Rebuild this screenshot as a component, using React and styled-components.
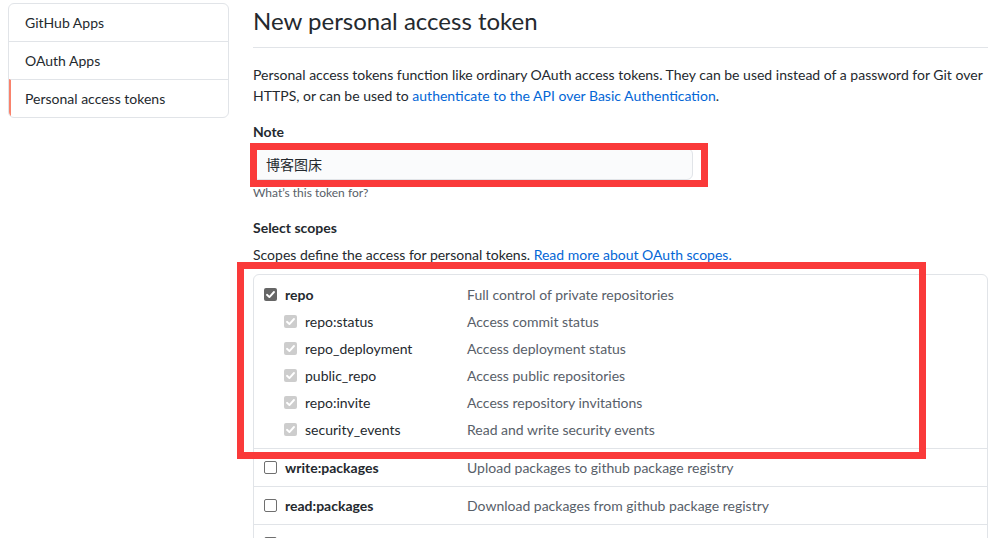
import React from "react";
import styled, { createGlobalStyle } from "styled-components";

const GlobalStyle = createGlobalStyle`
    html, body {
        margin: 0;
        overflow: hidden;
        background: #fff;
    }
    body {
        font-family: Lato, "Noto Sans CJK SC", sans-serif;
        font-size: 14px;
        line-height: 1.5;
        color: #24292e;
    }
`;

const menu = ["GitHub Apps", "OAuth Apps", "Personal access tokens"];

const repoScopes = [
    ["repo:status", "Access commit status"],
    ["repo_deployment", "Access deployment status"],
    ["public_repo", "Access public repositories"],
    ["repo:invite", "Access repository invitations"],
    ["security_events", "Read and write security events"],
];

const otherScopes = [
    ["write:packages", "Upload packages to github package registry"],
    ["read:packages", "Download packages from github package registry"],
    ["delete:packages", "Delete packages from github package registry"],
];

const Check = ({ state }) => (
    <Box state={state}>
        {state !== "off" && (
            <svg width="11" height="11" viewBox="0 0 11 11">
                <path d="M2 5.8 L4.4 8.1 L9 3" fill="none" stroke="#fff" strokeWidth="1.9" strokeLinecap="round" strokeLinejoin="round" />
            </svg>
        )}
    </Box>
);

const App = () => {
    return (
        <>
            <GlobalStyle />
            <Page>
                <Sidebar>
                    {menu.map((m, i) => (
                        <MenuItem key={m} selected={i === 2}>{m}</MenuItem>
                    ))}
                </Sidebar>
                <Main>
                    <Title>New personal access token</Title>
                    <Lead>
                        Personal access tokens function like ordinary OAuth access tokens. They can be used instead of a password for Git over
                        HTTPS, or can be used to <Link>authenticate to the API over Basic Authentication</Link>.
                    </Lead>

                    <Label>Note</Label>
                    <InputWrap>
                        <Input defaultValue="博客图床" />
                        <Mark top="-5px" left="-3px" right="-15px" bottom="-7px" />
                    </InputWrap>
                    <Hint>What’s this token for?</Hint>

                    <Label>Select scopes</Label>
                    <Desc>
                        Scopes define the access for personal tokens. <Link>Read more about OAuth scopes.</Link>
                    </Desc>

                    <ScopeBox>
                        <ScopeGroup>
                            <ScopeRow>
                                <ScopeName>
                                    <Check state="on" />
                                    <b>repo</b>
                                </ScopeName>
                                <ScopeDesc>Full control of private repositories</ScopeDesc>
                            </ScopeRow>
                            {repoScopes.map(([n, d]) => (
                                <ScopeRow key={n}>
                                    <ScopeName sub>
                                        <Check state="dim" />
                                        {n}
                                    </ScopeName>
                                    <ScopeDesc>{d}</ScopeDesc>
                                </ScopeRow>
                            ))}
                            <Mark top="-13px" left="-17px" right="61px" bottom="-11px" />
                        </ScopeGroup>
                        {otherScopes.map(([n, d]) => (
                            <ScopeItem key={n}>
                                <ScopeName>
                                    <Check state="off" />
                                    <b>{n}</b>
                                </ScopeName>
                                <ScopeDesc>{d}</ScopeDesc>
                            </ScopeItem>
                        ))}
                    </ScopeBox>
                </Main>
            </Page>
        </>
    );
};

export default App;

const Page = styled.div`
    display: flex;
    align-items: flex-start;
    gap: 24px;
    padding: 3px 20px 0 8px;
`;

const Sidebar = styled.nav`
    width: 219px;
    flex: none;
    border: 1px solid #e1e4e8;
    border-radius: 6px;
    overflow: hidden;
`;

const MenuItem = styled.div`
    padding: 8px 16px 8px ${(p) => (p.selected ? "14px" : "16px")};
    border-left: ${(p) => (p.selected ? "2px solid #f9826c" : "none")};
    line-height: 21px;
    color: #24292e;
    & + & {
        border-top: 1px solid #e1e4e8;
    }
`;

const Main = styled.main`
    flex: 1;
    min-width: 0;
`;

const Title = styled.h2`
    margin: 0 0 16px;
    padding-bottom: 8px;
    border-bottom: 1px solid #e1e4e8;
    font-size: 24px;
    font-weight: 400;
    line-height: 36px;
`;

const Lead = styled.p`
    margin: 0 0 15px;
    line-height: 21px;
`;

const Link = styled.a`
    color: #0366d6;
    text-decoration: none;
`;

const Label = styled.div`
    font-weight: 700;
    line-height: 21px;
    margin-bottom: 6px;
`;

const InputWrap = styled.div`
    position: relative;
    width: 440px;
`;

const Input = styled.input`
    box-sizing: border-box;
    width: 100%;
    height: 32px;
    padding: 0 12px;
    border: 1px solid #e1e4e8;
    border-radius: 6px;
    background: #fafbfc;
    font-family: Lato, "Noto Sans CJK SC", sans-serif;
    font-size: 14px;
    color: #24292e;
    outline: none;
`;

const Mark = styled.div`
    position: absolute;
    top: ${(p) => p.top};
    left: ${(p) => p.left};
    right: ${(p) => p.right};
    bottom: ${(p) => p.bottom};
    border: 7px solid #fa3a3a;
    pointer-events: none;
`;

const Hint = styled.div`
    margin: 4px 0 15px;
    font-size: 12px;
    line-height: 18px;
    color: #586069;
`;

const Desc = styled.p`
    margin: 0 0 9px;
    line-height: 21px;
`;

const ScopeBox = styled.div`
    border: 1px solid #e1e4e8;
    border-radius: 6px;
`;

const ScopeGroup = styled.div`
    position: relative;
    display: flex;
    flex-direction: column;
    gap: 6px;
    padding: 9px 10px 8px;
`;

const ScopeRow = styled.div`
    display: grid;
    grid-template-columns: 203px 1fr;
    align-items: center;
    line-height: 21px;
`;

const ScopeItem = styled(ScopeRow)`
    padding: 8px 10px;
    border-top: 1px solid #e1e4e8;
`;

const ScopeName = styled.div`
    display: flex;
    align-items: center;
    gap: 8px;
    padding-left: ${(p) => (p.sub ? "20px" : "0")};
    b {
        font-weight: 700;
    }
`;

const ScopeDesc = styled.div`
    color: #586069;
`;

const Box = styled.span`
    box-sizing: border-box;
    width: 13px;
    height: 13px;
    flex: none;
    display: flex;
    align-items: center;
    justify-content: center;
    border-radius: 2px;
    background: ${(p) => (p.state === "on" ? "#666" : p.state === "dim" ? "#cdcdcd" : "#fff")};
    border: ${(p) => (p.state === "off" ? "1px solid #6f6f6f" : "none")};
`;
